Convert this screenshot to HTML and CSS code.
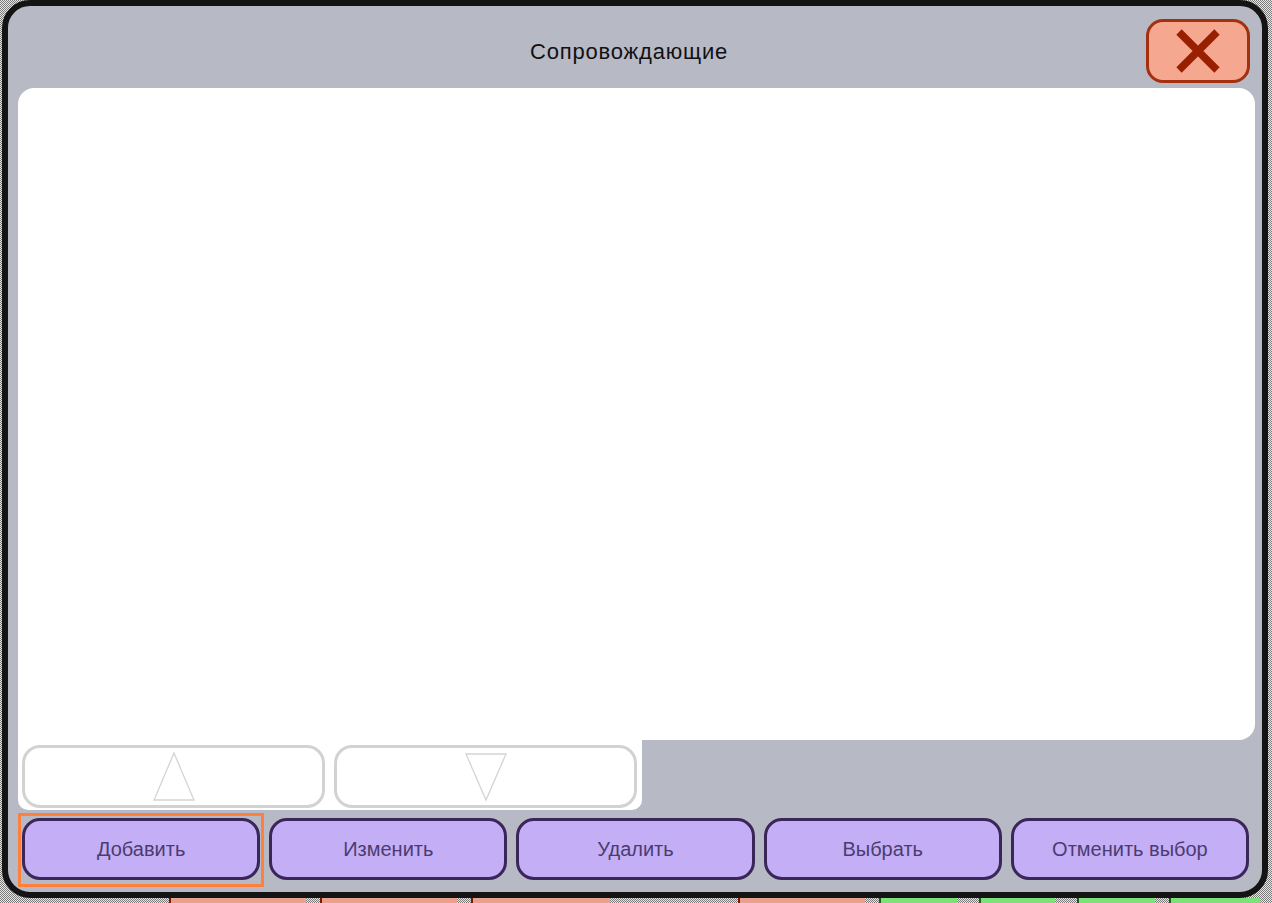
FILE: index.html
```html
<!DOCTYPE html>
<html lang="ru">
<head>
<meta charset="utf-8">
<title>Сопровождающие</title>
<link rel="stylesheet" href="styles.css">
</head>
<body>
<div class="screen">
  <div class="frame">
    <div class="header">
      <div class="title">Сопровождающие</div>
      <button class="close" type="button" aria-label="Закрыть">
        <svg width="46" height="46" viewBox="0 0 46 46">
          <path d="M4 4 L42 42 M42 4 L4 42" stroke="#982000" stroke-width="7.5" stroke-linecap="butt" fill="none"/>
        </svg>
      </button>
    </div>
    <div class="body">
      <div class="list"></div>
      <div class="scroller">
        <div class="pager">
          <button class="arrow" type="button" aria-label="Вверх">
            <svg width="44" height="50" viewBox="0 0 44 50"><path d="M22 1 L42 48 L2 48 Z" fill="none" stroke="#d4d4d4" stroke-width="1.3"/></svg>
          </button>
          <button class="arrow" type="button" aria-label="Вниз">
            <svg width="44" height="50" viewBox="0 0 44 50"><path d="M2 2 L42 2 L22 48 Z" fill="none" stroke="#d4d4d4" stroke-width="1.3"/></svg>
          </button>
        </div>
      </div>
      <div class="actions">
        <button class="btn focused" type="button">Добавить</button>
        <button class="btn" type="button">Изменить</button>
        <button class="btn" type="button">Удалить</button>
        <button class="btn" type="button">Выбрать</button>
        <button class="btn" type="button">Отменить выбор</button>
      </div>
    </div>
  </div>
  <div class="under">
    <span class="gap g1"></span><span class="blk salmon w1"></span><span class="gap g2"></span><span class="blk salmon w2"></span><span class="gap g2"></span><span class="blk salmon w3"></span><span class="gap g3"></span><span class="blk salmon w4"></span><span class="gap g2"></span><span class="blk green w5"></span><span class="gap g4"></span><span class="blk green w6"></span><span class="gap g4"></span><span class="blk green w7"></span><span class="gap g2"></span><span class="blk green w8"></span>
  </div>
</div>
</body>
</html>
```

FILE: styles.css
```css
* { box-sizing: border-box; }

html, body {
  margin: 0;
  padding: 0;
  width: 1272px;
  height: 903px;
  overflow: hidden;
}

body {
  font-family: "Liberation Sans", Arial, sans-serif;
  background-color: #9a9a9a;
  background-image: repeating-conic-gradient(#e8e8e8 0 25%, #7a7a7a 0 50%);
  background-size: 2px 2px;
}

.screen {
  display: flex;
  flex-direction: column;
  height: 903px;
}

.frame {
  margin: 0 4px 0 2px;
  height: 898px;
  border: 6px solid #141414;
  border-radius: 28px;
  background: #b7b9c5;
  display: flex;
  flex-direction: column;
}

.header {
  height: 82px;
  flex: none;
  display: flex;
  align-items: flex-start;
  justify-content: center;
}

.title {
  font-size: 22px;
  letter-spacing: 0.8px;
  color: #111;
  margin-top: 33px;
  margin-left: 104px;
  flex: 1;
  text-align: center;
}

.close {
  flex: none;
  width: 104px;
  height: 64px;
  margin: 13px 12px 0 0;
  background: #f5a790;
  border: 3px solid #a3300f;
  border-radius: 17px;
  padding: 0;
  display: flex;
  align-items: center;
  justify-content: center;
}

.close svg { display: block; }

.body {
  flex: 1;
  display: flex;
  flex-direction: column;
  padding: 0 7px 0 10px;
}

.list {
  height: 652px;
  background: #fff;
  border-radius: 16px 16px 16px 0;
}

.scroller {
  display: flex;
}

.pager {
  width: 624px;
  height: 70px;
  background: #fff;
  border-radius: 0 0 10px 10px;
  display: flex;
  gap: 9px;
  padding: 5px 5px 2px 4px;
}

.arrow {
  flex: 1;
  height: 63px;
  background: #fff;
  border: 3px solid #d2d2d2;
  border-radius: 18px;
  padding: 0;
  display: flex;
  align-items: center;
  justify-content: center;
}

.arrow svg { display: block; }

.actions {
  display: flex;
  gap: 9px;
  margin-top: 8px;
  padding: 0 6px 0 4px;
}

.btn {
  flex: 1;
  height: 62px;
  background: #c4aef6;
  border: 3px solid #3a2658;
  border-radius: 18px;
  font-family: "Liberation Sans", Arial, sans-serif;
  font-size: 20px;
  color: #4b3c70;
  padding: 0;
  position: relative;
}

.btn.focused::after {
  content: "";
  position: absolute;
  top: -8px;
  bottom: -10px;
  left: -7px;
  right: -7px;
  border: 3px solid #ff7f3c;
  pointer-events: none;
}

.under {
  height: 5px;
  display: flex;
}

.gap { display: block; height: 5px; }
.blk { display: block; height: 5px; border-left: 2px solid #7a1a00; }
.salmon { background: #e9a08c; }
.green { background: #7ee07a; border-left-color: #1d5a1a; }

.g1 { width: 169px; }
.g2 { width: 14px; }
.g3 { width: 128px; }
.g4 { width: 22px; }
.w1 { width: 137px; }
.w2 { width: 137px; }
.w3 { width: 139px; }
.w4 { width: 127px; }
.w5 { width: 78px; }
.w6 { width: 76px; }
.w7 { width: 78px; }
.w8 { width: 91px; }
```
